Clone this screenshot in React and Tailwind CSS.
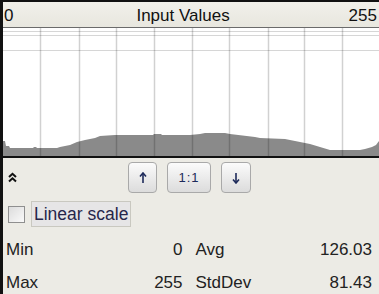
import React from 'react';

const histo = [
  [0, 128], [0, 113], [2, 113], [3, 118], [6, 118], [7, 120], [30, 120], [31, 119], [33, 119], [34, 120],
  [54, 120], [57, 119], [62, 118], [67, 117], [74, 114], [82, 112], [92, 110], [97, 108], [112, 107],
  [150, 107], [151, 106], [158, 106], [159, 107], [187, 107], [197, 106], [202, 105], [222, 105],
  [227, 106], [252, 109], [257, 110], [282, 111], [287, 112], [297, 114], [307, 116], [317, 119],
  [327, 122], [357, 122], [362, 121], [369, 119], [373, 117], [376, 113], [376, 128],
];

const vLines = [37, 76, 113, 151, 189, 226, 265, 301, 339];

const Histogram = () => (
  <svg width="376" height="128" viewBox="0 0 376 128" className="block">
    <rect width="376" height="128" fill="#ffffff" />
    {[3, 7, 22].map((y) => (
      <line key={y} x1="0" x2="376" y1={y + 0.5} y2={y + 0.5} stroke="#d6d6d6" strokeWidth="1.2" />
    ))}
    <polygon points={histo.map((p) => p.join(',')).join(' ')} fill="#8a8a8a" />
    {vLines.map((x) => (
      <line key={x} x1={x + 0.5} x2={x + 0.5} y1="0" y2="128" stroke="rgba(0,0,0,0.18)" strokeWidth="1.5" />
    ))}
  </svg>
);

const ToolButton = ({ children, className = '' }) => (
  <button
    className={`h-[31px] rounded-[4px] border border-[#a9a9a9] bg-gradient-to-b from-[#fbfbfb] to-[#dcdcdc] flex items-center justify-center text-[#1d2a5a] ${className}`}
  >
    {children}
  </button>
);

const Arrow = ({ down }) => (
  <svg width="8" height="12" viewBox="0 0 8 12" className={down ? 'rotate-180' : ''}>
    <path d="M4 1 L4 11" stroke="#1d2a5a" strokeWidth="1.6" />
    <path d="M1 4.5 L4 1 L7 4.5" stroke="#1d2a5a" strokeWidth="1.6" fill="none" />
  </svg>
);

const Stat = ({ label, value }) => (
  <div className="flex justify-between items-center">
    <span>{label}</span>
    <span>{value}</span>
  </div>
);

export default function App() {
  return (
    <div
      className="w-[379px] h-[294px] bg-[#ecebe5] overflow-hidden border-l-[3px] border-[#111] text-[#222]"
      style={{ fontFamily: '"Liberation Sans", Arial, sans-serif' }}
    >
      {/* header */}
      <div className="h-[28px] -ml-[3px] border-t-2 border-[#111] border-b border-b-[#6b6b6b] bg-gradient-to-b from-[#f1f0ea] to-[#e8e7df] flex items-center justify-between pl-[4px] pr-[2px] pt-[2px] text-[17px] leading-none text-[#111]">
        <span>0</span>
        <span className="ml-[4px]">Input Values</span>
        <span>255</span>
      </div>

      {/* graph */}
      <div className="border-b-2 border-[#111]">
        <Histogram />
      </div>

      {/* controls */}
      <div className="grid grid-cols-[1fr_auto_1fr] items-center mt-[4px] pl-[4px]">
        <div>
          <svg width="11" height="11" viewBox="0 0 11 11">
            <path d="M2 5 L5.5 1.8 L9 5" stroke="#111" strokeWidth="2" fill="none" />
            <path d="M2 9.5 L5.5 6.3 L9 9.5" stroke="#111" strokeWidth="2" fill="none" />
          </svg>
        </div>
        <div className="flex gap-[10px] -ml-[7px]">
          <ToolButton className="w-[29px]">
            <Arrow />
          </ToolButton>
          <ToolButton className="w-[44px] text-[13px] tracking-[1px]">1:1</ToolButton>
          <ToolButton className="w-[30px]">
            <Arrow down />
          </ToolButton>
        </div>
        <div />
      </div>

      {/* linear scale */}
      <div className="flex items-center gap-[6px] mt-[8px] pl-[5px]">
        <div className="w-[17px] h-[17px] border border-[#8f8f8f] bg-gradient-to-br from-[#dcdcdc] to-[#fafafa]" />
        <div className="h-[26px] px-[2px] border border-[#c9c8c0] bg-[#e6e5e6] flex items-center text-[17.5px] text-[#26264a]">
          Linear scale
        </div>
      </div>

      {/* stats */}
      <div className="grid grid-cols-2 gap-x-[13px] gap-y-[16px] pl-[3px] pr-[7px] mt-[14px] text-[17px] leading-[17px]">
        <Stat label="Min" value="0" />
        <Stat label="Avg" value="126.03" />
        <Stat label="Max" value="255" />
        <Stat label="StdDev" value="81.43" />
      </div>
    </div>
  );
}
